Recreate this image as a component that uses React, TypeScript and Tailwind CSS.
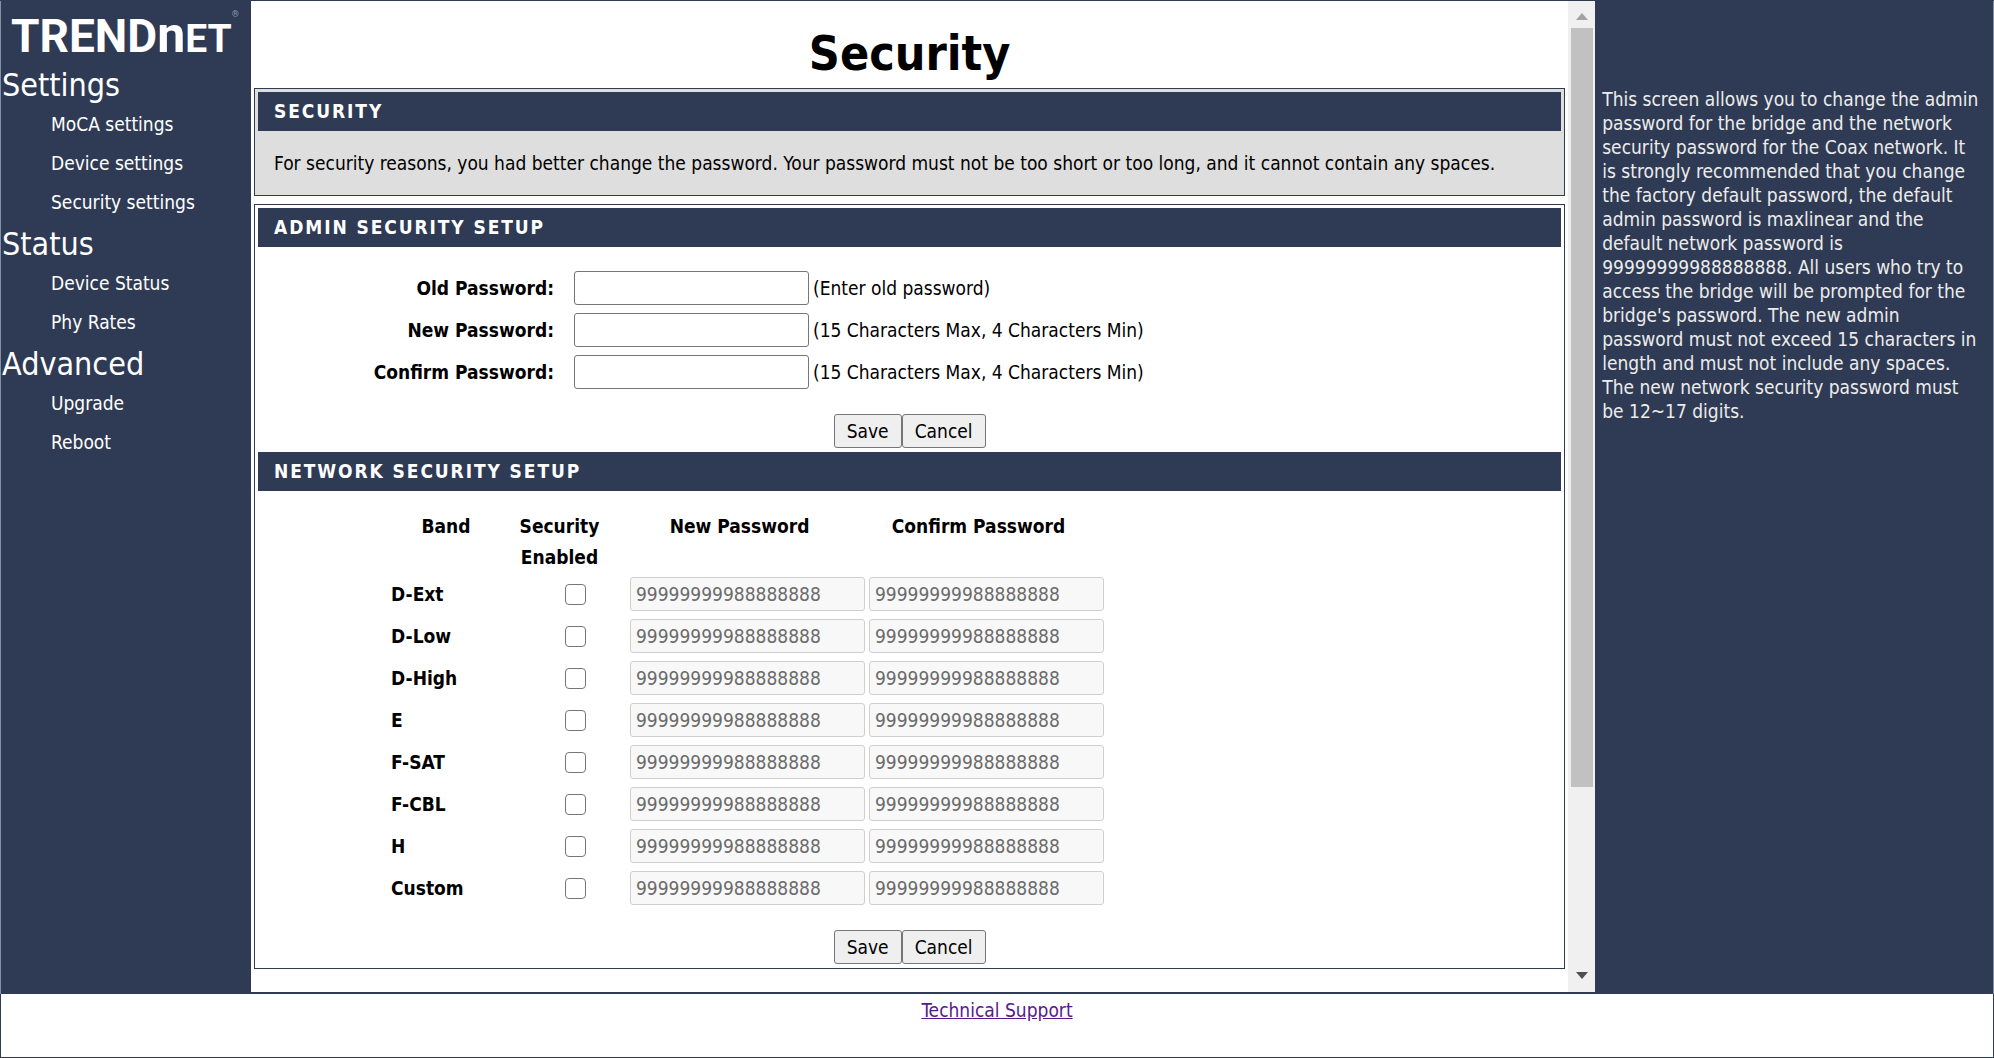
import React, { useState } from 'react';

const menu = [
  { title: 'Settings', items: ['MoCA settings', 'Device settings', 'Security settings'] },
  { title: 'Status', items: ['Device Status', 'Phy Rates'] },
  { title: 'Advanced', items: ['Upgrade', 'Reboot'] },
];

const adminFields = [
  { id: 'old-password', label: 'Old Password:', hint: '(Enter old password)' },
  { id: 'new-password', label: 'New Password:', hint: '(15 Characters Max, 4 Characters Min)' },
  { id: 'confirm-password', label: 'Confirm Password:', hint: '(15 Characters Max, 4 Characters Min)' },
];

const bands = ['D-Ext', 'D-Low', 'D-High', 'E', 'F-SAT', 'F-CBL', 'H', 'Custom'];
const defaultPassword = '99999999988888888';

function Logo() {
  return (
    <a href="#home" aria-label="TRENDnET" className="flex h-[64px] items-baseline pl-[10px] pt-[2px] font-['Roboto'] font-bold leading-[64px] text-white">
      <span className="text-[46px]">TREND</span>
      <span className="text-[50px]">n</span>
      <span className="text-[39px]">ET</span>
      <span className="self-start text-[9px] leading-[22px] text-[#8a92a3]">®</span>
    </a>
  );
}

function Sidebar() {
  return (
    <nav className="w-[251px] shrink-0 border-l border-[#8790a2] text-white">
      <Logo />
      {menu.map((group) => (
        <div key={group.title}>
          <h2 className="pl-px text-[32px] leading-[40px]">{group.title}</h2>
          <ul className="pb-[2px] pl-[50px] text-[19px] leading-[39px]">
            {group.items.map((item) => (
              <li key={item}>
                <a href="#menu">{item}</a>
              </li>
            ))}
          </ul>
        </div>
      ))}
    </nav>
  );
}

function PanelTitle({ children }: { children: React.ReactNode }) {
  return (
    <h2 className="bg-[#2f3b54] pl-4 text-[19px] font-bold leading-[39px] tracking-widest text-white">{children}</h2>
  );
}

function FormButtons() {
  const style = 'h-[34px] rounded-[3px] border border-[#767676] bg-[#efefef] px-3';
  return (
    <div className="flex justify-center pb-1 pt-5">
      <button type="submit" className={style}>Save</button>
      <button type="reset" className={style}>Cancel</button>
    </div>
  );
}

function AdminForm() {
  return (
    <form onSubmit={(e) => e.preventDefault()}>
      <div className="flex flex-col gap-2 pb-[5px] pt-6">
        {adminFields.map((field) => (
          <div key={field.id} className="flex items-center">
            <label htmlFor={field.id} className="w-[296px] text-right font-bold">{field.label}</label>
            <input id={field.id} type="password" className="ml-5 mr-1 h-[34px] w-[235px] rounded-[3px] border border-[#767676] bg-white px-1" />
            <span>{field.hint}</span>
          </div>
        ))}
      </div>
      <FormButtons />
    </form>
  );
}

function NetworkForm() {
  const [enabled, setEnabled] = useState<Record<string, boolean>>({});
  const box = 'h-[34px] w-[235px] rounded-[3px] border border-[#cfcfcf] bg-[#f8f8f8] px-[5px] text-[#6b6b6b] disabled:opacity-100';

  return (
    <form onSubmit={(e) => e.preventDefault()}>
      <table className="mb-px ml-[133px] mt-5">
        <thead>
          <tr className="align-top leading-[31px]">
            <th className="w-[110px]">Band</th>
            <th className="w-[129px] pr-3">Security<br />Enabled</th>
            <th className="w-[239px] pr-5">New Password</th>
            <th className="w-[239px] pr-5">Confirm Password</th>
          </tr>
        </thead>
        <tbody>
          {bands.map((band) => (
            <tr key={band} className="h-[42px]">
              <th scope="row" className="text-left">
                <label htmlFor={`enable-${band}`}>{band}</label>
              </th>
              <td className="pl-5">
                <input
                  id={`enable-${band}`}
                  type="checkbox"
                  className="mx-auto block size-[21px] appearance-none rounded-[4px] border border-[#767676] bg-white checked:bg-[#0075ff]"
                  checked={!!enabled[band]}
                  onChange={(e) => setEnabled({ ...enabled, [band]: e.target.checked })}
                />
              </td>
              <td>
                <input aria-label={`${band} new password`} className={box} defaultValue={defaultPassword} disabled={!enabled[band]} />
              </td>
              <td>
                <input aria-label={`${band} confirm password`} className={box} defaultValue={defaultPassword} disabled={!enabled[band]} />
              </td>
            </tr>
          ))}
        </tbody>
      </table>
      <FormButtons />
    </form>
  );
}

function ScrollBar() {
  return (
    <div className="flex w-[27px] shrink-0 flex-col items-center bg-[#f0f0f0]">
      <svg width="12" height="27" viewBox="0 0 12 27" className="shrink-0">
        <path d="M0 19 L6 12 L12 19 Z" fill="#a3a3a3" />
      </svg>
      <div className="w-full grow">
        <div className="mx-auto h-[81%] w-[22px] bg-[#c1c1c1]" />
      </div>
      <svg width="12" height="27" viewBox="0 0 12 27" className="shrink-0">
        <path d="M0 7 L12 7 L6 14 Z" fill="#505050" />
      </svg>
    </div>
  );
}

export default function App() {
  return (
    <div className="flex min-h-screen flex-col bg-[#2f3b54] pb-px pt-px font-['DejaVu_Sans_Condensed','DejaVu_Sans',sans-serif] text-[19px] text-black">
      <div className="flex grow">
        <Sidebar />
        <div className="mb-[2px] flex grow bg-white">
          <main className="grow px-[3px]">
            <h1 className="h-[87px] pt-4 text-center text-[48px] font-bold leading-[72px]">Security</h1>
            <section className="border border-[#2f3b54] bg-[#dedede] p-[3px]">
              <PanelTitle>SECURITY</PanelTitle>
              <p className="px-4 pb-[13px] pt-4 leading-[32px]">
                For security reasons, you had better change the password. Your password must not be too short or too long, and it cannot contain any spaces.
              </p>
            </section>
            <section className="mt-2 border border-[#2f3b54] px-[3px] pt-[3px]">
              <PanelTitle>ADMIN SECURITY SETUP</PanelTitle>
              <AdminForm />
              <PanelTitle>NETWORK SECURITY SETUP</PanelTitle>
              <NetworkForm />
            </section>
          </main>
          <ScrollBar />
        </div>
        <aside className="w-1/5 shrink-0 border-r border-[#8790a2] pl-[7px] pr-3 pt-[86px] leading-[24px] text-[#ececec]">
          This screen allows you to change the admin password for the bridge and the network security password for the Coax network. It is strongly recommended that you change the factory default password, the default admin password is maxlinear and the default network password is 99999999988888888. All users who try to access the bridge will be prompted for the bridge's password. The new admin password must not exceed 15 characters in length and must not include any spaces. The new network security password must be 12~17 digits.
        </aside>
      </div>
      <footer className="mx-px h-[63px] bg-white pt-[2px] text-center leading-[28px]">
        <a href="#support" className="text-[#551a8b] underline">Technical Support</a>
      </footer>
    </div>
  );
}
